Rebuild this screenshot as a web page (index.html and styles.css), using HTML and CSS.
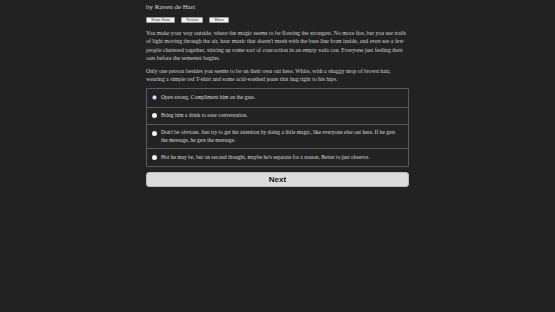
FILE: index.html
```html
<!DOCTYPE html>
<html lang="en">
<head>
  <meta charset="UTF-8">
  <title>Story</title>
  <link rel="stylesheet" href="styles.css">
</head>
<body>
  <div class="page">
    <div class="byline">by Raven de Hart</div>

    <div class="toolbar">
      <button class="tool">Show Stats</button>
      <button class="tool">Restart</button>
      <button class="tool">Menu</button>
    </div>

    <!-- story text -->
    <div class="story">
      <p>You make your way outside, where the magic seems to be flowing the strongest. No more fire, but you see trails of light moving through the air, hear music that doesn't mesh with the bass line from inside, and even see a few people clustered together, stirring up some sort of concoction in an empty soda can. Everyone just feeling their oats before the semester begins.</p>
      <p>Only one person besides you seems to be on their own out here. White, with a shaggy mop of brown hair, wearing a simple red T-shirt and some acid-washed jeans that hug tight to his hips.</p>
    </div>

    <!-- choices -->
    <div class="choices">
      <label class="choice"><span class="dot checked"></span><span>Open strong. Compliment him on the gate.</span></label>
      <label class="choice"><span class="dot"></span><span>Bring him a drink to ease conversation.</span></label>
      <label class="choice"><span class="dot"></span><span>Don't be obvious. Just try to get his attention by doing a little magic, like everyone else out here. If he gets the message, he gets the message.</span></label>
      <label class="choice"><span class="dot"></span><span>Hot he may be, but on second thought, maybe he's separate for a reason. Better to just observe.</span></label>
    </div>

    <button class="next">Next</button>
  </div>
</body>
</html>
```

FILE: styles.css
```css
body {
  margin: 0;
  background-color: #222;
  color: #d6d6d6;
  font-family: "Liberation Serif", "Times New Roman", serif;
}

.page {
  width: 263px;
  margin: 0 auto;
  padding-top: 3px;
}

.byline {
  font-size: 7px;
  line-height: 9px;
  color: #dadada;
}

.toolbar {
  display: flex;
  gap: 6px;
  margin-top: 5px;
}

.tool {
  height: 6px;
  padding: 0 4px;
  font-family: "Liberation Sans", Arial, sans-serif;
  font-size: 3.8px;
  line-height: 4px;
  color: #333;
  background-color: #f2f2f2;
  border: 1px solid #999;
  border-radius: 1px;
}

.story {
  margin-top: 6px;
}

.story p {
  margin: 0 0 4.4px;
  font-size: 5.8px;
  line-height: 8.3px;
  color: #d0d0d0;
}

.choices {
  margin-top: 4px;
  border: 1px solid #5a5a5a;
  border-radius: 1px;
}

.choice {
  display: flex;
  align-items: flex-start;
  gap: 4px;
  padding: 4.5px 5px 4px;
  font-size: 5.5px;
  line-height: 7.6px;
  color: #dcdcdc;
  border-bottom: 1px solid #5a5a5a;
}

.choice:first-child {
  padding-top: 5.5px;
  padding-bottom: 5px;
}

.choice:last-child {
  border-bottom: none;
}

.dot {
  flex: none;
  width: 5px;
  height: 5px;
  margin-top: 1.3px;
  border-radius: 50%;
  background-color: #f4f4f4;
  box-sizing: border-box;
}

.dot.checked {
  background-color: #fff;
  border: 1.4px solid #4a7fd6;
}

.next {
  display: block;
  width: 100%;
  height: 15px;
  margin-top: 5px;
  padding: 0;
  font-family: "Liberation Sans", Arial, sans-serif;
  font-size: 8px;
  font-weight: bold;
  color: #111;
  background-color: #dcdcdc;
  border: 1px solid #bbb;
  border-radius: 3px;
}
```
